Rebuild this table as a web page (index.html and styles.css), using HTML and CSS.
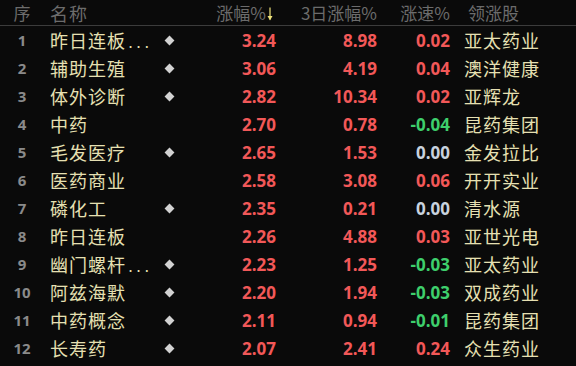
FILE: index.html
```html
<!DOCTYPE html>
<html lang="zh-CN">
<head>
  <meta charset="UTF-8">
  <title>板块涨幅</title>
  <link rel="stylesheet" href="styles.css">
</head>
<body>
  <div class="board">
    <div class="row head">
      <div class="idx">序</div>
      <div class="name">名称</div>
      <div class="mark"></div>
      <div class="num zf">涨幅%<svg class="sort" width="6" height="14" viewBox="0 0 6 14"><path d="M3 0.5V12.5" stroke="#eee27a" stroke-width="1.2"/><path d="M0.5 9L3 13.5L5.5 9Z" fill="#eee27a"/></svg></div>
      <div class="num zf3">3日涨幅%</div>
      <div class="num zs">涨速%</div>
      <div class="lead">领涨股</div>
    </div>

    <div class="row"><div class="idx">1</div><div class="name">昨日连板<span class="dots">...</span></div><div class="mark"><i></i></div><div class="num zf up">3.24</div><div class="num zf3 up">8.98</div><div class="num zs up">0.02</div><div class="lead">亚太药业</div></div>
    <div class="row"><div class="idx">2</div><div class="name">辅助生殖</div><div class="mark"><i></i></div><div class="num zf up">3.06</div><div class="num zf3 up">4.19</div><div class="num zs up">0.04</div><div class="lead">澳洋健康</div></div>
    <div class="row"><div class="idx">3</div><div class="name">体外诊断</div><div class="mark"><i></i></div><div class="num zf up">2.82</div><div class="num zf3 up">10.34</div><div class="num zs up">0.02</div><div class="lead">亚辉龙</div></div>
    <div class="row"><div class="idx">4</div><div class="name">中药</div><div class="mark"></div><div class="num zf up">2.70</div><div class="num zf3 up">0.78</div><div class="num zs down">-0.04</div><div class="lead">昆药集团</div></div>
    <div class="row"><div class="idx">5</div><div class="name">毛发医疗</div><div class="mark"><i></i></div><div class="num zf up">2.65</div><div class="num zf3 up">1.53</div><div class="num zs flat">0.00</div><div class="lead">金发拉比</div></div>
    <div class="row"><div class="idx">6</div><div class="name">医药商业</div><div class="mark"></div><div class="num zf up">2.58</div><div class="num zf3 up">3.08</div><div class="num zs up">0.06</div><div class="lead">开开实业</div></div>
    <div class="row"><div class="idx">7</div><div class="name">磷化工</div><div class="mark"><i></i></div><div class="num zf up">2.35</div><div class="num zf3 up">0.21</div><div class="num zs flat">0.00</div><div class="lead">清水源</div></div>
    <div class="row"><div class="idx">8</div><div class="name">昨日连板</div><div class="mark"></div><div class="num zf up">2.26</div><div class="num zf3 up">4.88</div><div class="num zs up">0.03</div><div class="lead">亚世光电</div></div>
    <div class="row"><div class="idx">9</div><div class="name">幽门螺杆<span class="dots">...</span></div><div class="mark"><i></i></div><div class="num zf up">2.23</div><div class="num zf3 up">1.25</div><div class="num zs down">-0.03</div><div class="lead">亚太药业</div></div>
    <div class="row"><div class="idx">10</div><div class="name">阿兹海默</div><div class="mark"><i></i></div><div class="num zf up">2.20</div><div class="num zf3 up">1.94</div><div class="num zs down">-0.03</div><div class="lead">双成药业</div></div>
    <div class="row"><div class="idx">11</div><div class="name">中药概念</div><div class="mark"><i></i></div><div class="num zf up">2.11</div><div class="num zf3 up">0.94</div><div class="num zs down">-0.01</div><div class="lead">昆药集团</div></div>
    <div class="row"><div class="idx">12</div><div class="name">长寿药</div><div class="mark"><i></i></div><div class="num zf up">2.07</div><div class="num zf3 up">2.41</div><div class="num zs up">0.24</div><div class="lead">众生药业</div></div>
  </div>
</body>
</html>
```

FILE: styles.css
```css
body {
  margin: 0;
  background: #0a0a0a;
  font-family: "Noto Sans CJK SC", "Noto Sans", sans-serif;
  color: #e6e0b2;
}

.board {
  width: 576px;
  height: 366px;
  overflow: hidden;
}

.row {
  display: flex;
  align-items: center;
  height: 28px;
}

.row.head {
  height: 25px;
  border-bottom: 1px solid #3c3c3c;
  color: #6c6c6c;
  font-size: 17px;
}

.idx {
  width: 44px;
  text-align: center;
  font-family: "Open Sans", sans-serif;
  font-weight: 700;
  font-size: 15px;
  color: #8a8a8a;
}

.head .idx {
  font-family: "Noto Sans CJK SC", sans-serif;
  font-weight: 400;
  font-size: 17px;
  color: #6c6c6c;
}

.name {
  width: 110px;
  padding-left: 6px;
  font-size: 18px;
  letter-spacing: 1px;
  white-space: nowrap;
}

.dots {
  font-family: "DejaVu Sans", sans-serif;
  font-size: 16px;
  letter-spacing: 3px;
  margin-left: 2px;
}

.mark {
  width: 18px;
  display: flex;
  justify-content: center;
}

.mark i {
  display: block;
  width: 7px;
  height: 7px;
  background: #d2d2d2;
  transform: rotate(45deg);
}

.num {
  text-align: right;
  font-family: "Open Sans", sans-serif;
  font-weight: 700;
  font-size: 17px;
}

.head .num {
  font-family: "Noto Sans CJK SC", sans-serif;
  font-weight: 400;
  font-size: 17px;
}

.zf { width: 98px; }
.zf3 { width: 101px; }
.zs { width: 73px; }

.sort {
  margin: 0 3px 0 1px;
  vertical-align: -1px;
}

.lead {
  padding-left: 14px;
  font-size: 18px;
  letter-spacing: 1px;
}

.head .lead {
  padding-left: 18px;
  font-size: 17px;
  letter-spacing: 0;
}

.up { color: #f25858; }
.down { color: #3ecf6c; }
.flat { color: #c8d2de; }
```
